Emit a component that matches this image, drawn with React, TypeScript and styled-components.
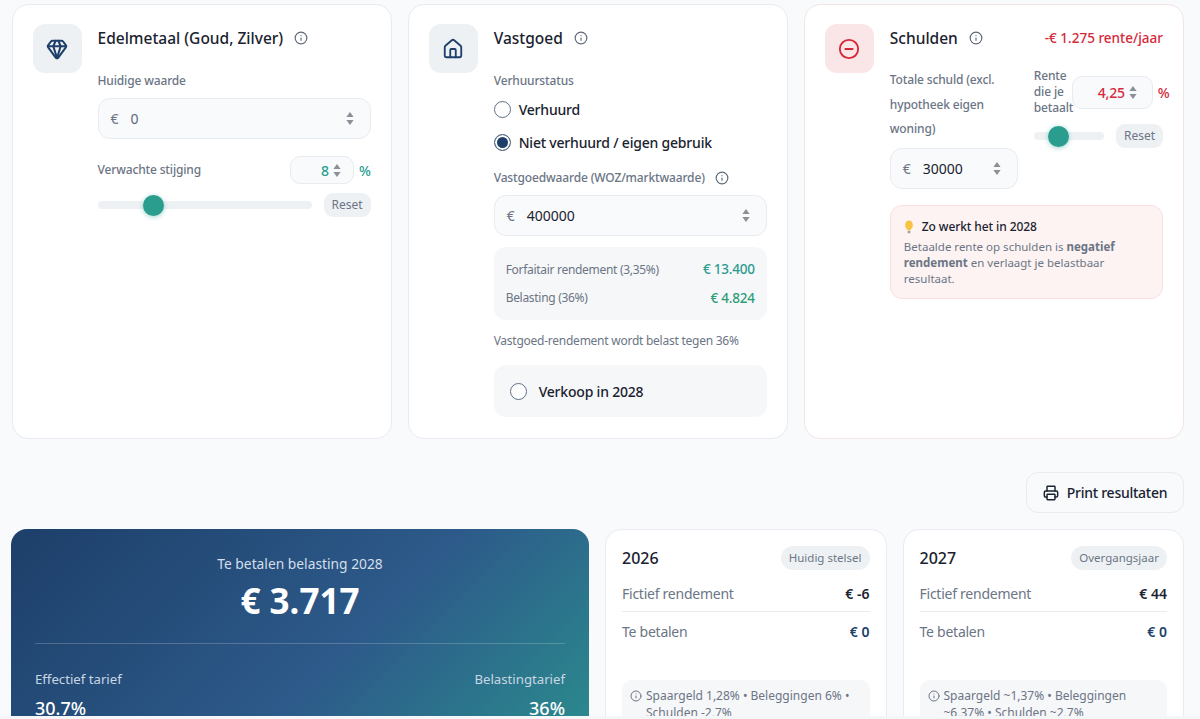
import React from "react";
import styled, { createGlobalStyle } from "styled-components";
import { CircleMinus, Gem, House, Info, Printer } from "lucide-react";

const navy = "#1d3f69";
const teal = "#2a9d8f";
const red = "#d62839";
const ink = "#1a2230";
const muted = "#6b7585";
const line = "#e8ebef";

const GlobalStyle = createGlobalStyle`
  html, body {
    margin: 0;
    height: 100%;
    overflow: hidden;
    background: #f8fafc;
  }
  body {
    font-family: "Noto Sans", "Open Sans", sans-serif;
    color: ${ink};
  }
`;

const Page = styled.div`
  height: 719px;
  overflow: hidden;
  box-sizing: border-box;
  padding: 4px 16px 0 11.5px;
`;

const TopGrid = styled.div`
  display: grid;
  grid-template-columns: repeat(3, minmax(0, 1fr));
  gap: 16px;
`;

const Card = styled.section<{ $tint?: boolean }>`
  box-sizing: border-box;
  height: 435px;
  background: #fff;
  border: 1px solid ${(p) => (p.$tint ? "#f3e4e5" : line)};
  border-radius: 16px;
  padding: 19px 20px;
  display: flex;
  gap: 16px;
`;

const IconBox = styled.div<{ $danger?: boolean }>`
  flex: none;
  width: 49px;
  height: 49px;
  border-radius: 12px;
  display: flex;
  align-items: center;
  justify-content: center;
  background: ${(p) => (p.$danger ? "#fae6e7" : "#eef1f4")};
  color: ${(p) => (p.$danger ? red : navy)};
`;

const Body = styled.div`
  flex: 1;
  min-width: 0;
`;

const TitleRow = styled.div`
  display: flex;
  align-items: center;
  gap: 11px;
  height: 28px;
`;

const Title = styled.h3`
  margin: 0;
  font-size: 15.5px;
  font-weight: 500;
  color: ${ink};
`;

const InfoIcon = styled(Info)`
  flex: none;
  color: #5f6978;
`;

const RenteTotal = styled.span`
  margin-left: auto;
  font-size: 13.5px;
  font-weight: 500;
  color: ${red};
`;

const FieldLabel = styled.div<{ $top?: number; $bottom?: number }>`
  display: flex;
  align-items: center;
  gap: 10px;
  margin: ${(p) => p.$top ?? 0}px 0 ${(p) => p.$bottom ?? 0}px;
  font-size: 12px;
  font-weight: 500;
  letter-spacing: -0.15px;
  color: ${muted};
  line-height: 20px;
`;

const NumberBox = styled.div<{ $narrow?: boolean }>`
  box-sizing: border-box;
  height: 41px;
  width: ${(p) => (p.$narrow ? "128px" : "100%")};
  display: flex;
  align-items: center;
  padding: 0 16px 0 12px;
  background: #f8fafc;
  border: 1px solid ${line};
  border-radius: 12px;
  font-size: 14px;
`;

const Euro = styled.span`
  color: ${muted};
  width: 20px;
`;

const Amount = styled.span<{ $empty?: boolean }>`
  flex: 1;
  color: ${(p) => (p.$empty ? "#5f6978" : ink)};
`;

const SpinnerShape = styled.svg`
  flex: none;
  color: #8b8f96;
`;

const Spinner = () => (
  <SpinnerShape width="8" height="15" viewBox="0 0 8 15" fill="currentColor">
    <path d="M4 1 7.6 6H.4z" />
    <path d="M4 14 .4 9h7.2z" />
  </SpinnerShape>
);

const RateRow = styled.div`
  display: flex;
  align-items: center;
  justify-content: space-between;
  margin: 17px 0 9px;
`;

const RateBox = styled.div<{ $wide?: boolean }>`
  box-sizing: border-box;
  width: ${(p) => (p.$wide ? "81px" : "64px")};
  height: ${(p) => (p.$wide ? "33px" : "28px")};
  display: flex;
  align-items: center;
  justify-content: flex-end;
  gap: 4px;
  padding: 0 ${(p) => (p.$wide ? "15px" : "12px")} 0 8px;
  background: #f8fafc;
  border: 1px solid ${line};
  border-radius: 10px;
`;

const RateValue = styled.span<{ $color: string }>`
  font-size: 14px;
  font-weight: 500;
  letter-spacing: -0.2px;
  color: ${(p) => p.$color};
`;

const RateField = styled.div`
  display: flex;
  flex: none;
  align-items: center;
  gap: 5px;
`;

const SliderRow = styled.div`
  display: flex;
  align-items: center;
  gap: 12px;
`;

const Track = styled.div`
  position: relative;
  flex: 1;
  height: 8px;
  border-radius: 4px;
  background: #eef1f4;
`;

const Thumb = styled.div`
  position: absolute;
  top: -6.5px;
  width: 21px;
  height: 21px;
  border-radius: 50%;
  background: ${teal};
  box-shadow: 0 1px 5px rgba(42, 157, 143, 0.45);
`;

const ResetButton = styled.div`
  flex: none;
  width: 47px;
  height: 24px;
  line-height: 24px;
  text-align: center;
  border-radius: 9px;
  background: #eef1f4;
  font-size: 12px;
  color: ${muted};
`;

const Slider = ({ thumb }: { thumb: number }) => (
  <SliderRow>
    <Track>
      <Thumb style={{ left: thumb }} />
    </Track>
    <ResetButton>Reset</ResetButton>
  </SliderRow>
);

const RadioRow = styled.div`
  display: flex;
  align-items: center;
  gap: 8px;
  height: 33px;
  font-size: 14px;
  font-weight: 500;
  letter-spacing: -0.2px;
`;

const Radio = styled.span<{ $on?: boolean }>`
  box-sizing: border-box;
  flex: none;
  width: 17px;
  height: 17px;
  border-radius: 50%;
  border: 1px solid #5f6f84;
  background: ${(p) => (p.$on ? navy : "#fff")};
  box-shadow: ${(p) => (p.$on ? "inset 0 0 0 2px #fff" : "none")};
`;

const StatBox = styled.div`
  margin-top: 11px;
  padding: 8px 12px;
  background: #f6f7f9;
  border-radius: 12px;
`;

const StatRow = styled.div`
  display: flex;
  align-items: center;
  justify-content: space-between;
  height: 28.5px;
  font-size: 12px;
  letter-spacing: -0.3px;
  color: ${muted};
`;

const StatValue = styled.span<{ $color: string }>`
  font-size: 13.5px;
  font-weight: 500;
  letter-spacing: -0.2px;
  color: ${(p) => p.$color};
`;

const Note = styled.p`
  margin: 12px 0 0;
  font-size: 12px;
  line-height: 18px;
  letter-spacing: -0.25px;
  color: ${muted};
`;

const SellBox = styled.div`
  margin-top: 15px;
  height: 52px;
  display: flex;
  align-items: center;
  gap: 12px;
  padding: 0 16px;
  background: #f6f7f9;
  border-radius: 12px;
  font-size: 14px;
  font-weight: 500;
  letter-spacing: -0.2px;
`;

const DebtGrid = styled.div`
  display: grid;
  grid-template-columns: 128px minmax(0, 1fr);
  gap: 16px;
  margin-top: 16px;
`;

const DebtLabel = styled.div`
  font-size: 12px;
  font-weight: 500;
  line-height: 24.5px;
  letter-spacing: -0.15px;
  color: ${muted};
  margin-bottom: 6px;
`;

const RenteHead = styled.div`
  display: flex;
  align-items: center;
  margin-bottom: 8px;
`;

const RenteLabel = styled.div`
  flex: none;
  width: 38px;
  font-size: 12px;
  font-weight: 500;
  line-height: 16px;
  letter-spacing: -0.15px;
  color: ${muted};
`;

const Tip = styled.div`
  margin-top: 16px;
  padding: 12px 13px 11px;
  background: #fdf3f2;
  border: 1px solid #f8e0de;
  border-radius: 12px;
`;

const TipTitle = styled.div`
  display: flex;
  align-items: center;
  gap: 8px;
  font-size: 12px;
  font-weight: 500;
  letter-spacing: -0.1px;
  line-height: 18px;
  margin-bottom: 3px;
`;

const TipText = styled.p`
  margin: 0;
  font-size: 11.5px;
  line-height: 16.3px;
  color: ${muted};
`;

const ActionRow = styled.div`
  display: flex;
  justify-content: flex-end;
  margin: 33px 0 16px;
`;

const PrintButton = styled.button`
  height: 41px;
  width: 158px;
  display: flex;
  align-items: center;
  justify-content: center;
  gap: 8px;
  background: #f8fafc;
  border: 1px solid ${line};
  border-radius: 12px;
  font: 500 14px "Noto Sans", sans-serif;
  letter-spacing: -0.25px;
  color: ${ink};
  padding: 0;
`;

const BottomGrid = styled.div`
  display: grid;
  grid-template-columns: 578px minmax(0, 1fr) minmax(0, 1fr);
  gap: 16px;
  margin-left: -0.5px;
`;

const Hero = styled.section`
  box-sizing: border-box;
  height: 330px;
  padding: 24px;
  border-radius: 16px;
  color: #fff;
  background: linear-gradient(135deg, #1d3f69 0%, #2d5a8a 50%, #2a9d8f 100%);
`;

const HeroLabel = styled.div`
  text-align: center;
  font-size: 13.8px;
  line-height: 21px;
  color: #d4dfea;
`;

const HeroAmount = styled.div`
  text-align: center;
  font-size: 35px;
  font-weight: 700;
  line-height: 48px;
  margin-top: 3px;
`;

const HeroRule = styled.hr`
  border: 0;
  height: 1px;
  background: rgba(255, 255, 255, 0.2);
  margin: 18px 0 25px;
`;

const HeroStats = styled.div`
  display: flex;
  justify-content: space-between;
`;

const HeroStat = styled.div<{ $right?: boolean }>`
  text-align: ${(p) => (p.$right ? "right" : "left")};
`;

const HeroStatLabel = styled.div`
  font-size: 13.2px;
  line-height: 21px;
  color: #c9d6e3;
`;

const HeroStatValue = styled.div`
  font-size: 18px;
  font-weight: 500;
  line-height: 27px;
  margin-top: 5px;
`;

const YearCard = styled.section`
  box-sizing: border-box;
  padding: 16px;
  background: #fff;
  border: 1px solid ${line};
  border-radius: 16px;
`;

const YearHead = styled.div`
  display: flex;
  align-items: center;
  justify-content: space-between;
  height: 24px;
  margin-bottom: 5px;
`;

const Year = styled.span`
  font-size: 16px;
  font-weight: 500;
`;

const Pill = styled.span`
  padding: 0 8px;
  line-height: 24px;
  border-radius: 12px;
  background: #eef1f4;
  font-size: 11.5px;
  color: ${muted};
`;

const YearRow = styled.div<{ $ruled?: boolean }>`
  display: flex;
  align-items: center;
  justify-content: space-between;
  height: ${(p) => (p.$ruled ? "36px" : "38px")};
  font-size: 14px;
  letter-spacing: -0.25px;
  color: ${muted};
  border-bottom: ${(p) => (p.$ruled ? `1px solid ${line}` : "0")};
`;

const YearValue = styled.span<{ $navy?: boolean }>`
  font-weight: 600;
  letter-spacing: 0;
  color: ${(p) => (p.$navy ? navy : ink)};
`;

const RateNote = styled.div`
  margin-top: 30px;
  display: flex;
  gap: 4px;
  padding: 8px;
  background: #f6f7f9;
  border-radius: 10px;
  font-size: 12px;
  line-height: 16.5px;
  color: ${muted};
`;

const NoteIcon = styled(Info)`
  flex: none;
  margin-top: 2px;
`;

const Gutter = styled.div`
  position: fixed;
  left: 0;
  right: 0;
  bottom: 0;
  height: 3px;
  background: #f5f6f8;
`;

const BulbIcon = () => (
  <svg width="10" height="14" viewBox="0 0 12 14" preserveAspectRatio="none">
    <path d="M6 .5a4.6 4.6 0 0 0-2.6 8.4c.5.4.7.9.7 1.4h3.8c0-.5.2-1 .7-1.4A4.6 4.6 0 0 0 6 .5z" fill="#f6c445" />
    <rect x="4.2" y="10.8" width="3.6" height="2.4" rx="1" fill="#a9a39a" />
  </svg>
);

const YearSummary = ({
  year,
  tag,
  fictief,
  note,
}: {
  year: string;
  tag: string;
  fictief: string;
  note: string;
}) => (
  <YearCard>
    <YearHead>
      <Year>{year}</Year>
      <Pill>{tag}</Pill>
    </YearHead>
    <YearRow $ruled>
      Fictief rendement
      <YearValue>{fictief}</YearValue>
    </YearRow>
    <YearRow>
      Te betalen
      <YearValue $navy>€ 0</YearValue>
    </YearRow>
    <RateNote>
      <NoteIcon size={12} />
      <span>{note}</span>
    </RateNote>
  </YearCard>
);

export default function App() {
  return (
    <Page>
      <GlobalStyle />
      <TopGrid>
        <Card>
          <IconBox>
            <Gem size={22} strokeWidth={2.2} />
          </IconBox>
          <Body>
            <TitleRow>
              <Title>Edelmetaal (Goud, Zilver)</Title>
              <InfoIcon size={14} />
            </TitleRow>
            <FieldLabel $top={19} $bottom={7}>Huidige waarde</FieldLabel>
            <NumberBox>
              <Euro>€</Euro>
              <Amount $empty>0</Amount>
              <Spinner />
            </NumberBox>
            <RateRow>
              <FieldLabel>Verwachte stijging</FieldLabel>
              <RateField>
                <RateBox>
                  <RateValue $color={teal}>8</RateValue>
                  <Spinner />
                </RateBox>
                <RateValue $color={teal}>%</RateValue>
              </RateField>
            </RateRow>
            <Slider thumb={45} />
          </Body>
        </Card>

        <Card>
          <IconBox>
            <House size={22} />
          </IconBox>
          <Body>
            <TitleRow>
              <Title>Vastgoed</Title>
              <InfoIcon size={14} />
            </TitleRow>
            <FieldLabel $top={19} $bottom={2}>Verhuurstatus</FieldLabel>
            <RadioRow>
              <Radio />
              Verhuurd
            </RadioRow>
            <RadioRow>
              <Radio $on />
              Niet verhuurd / eigen gebruik
            </RadioRow>
            <FieldLabel $top={9} $bottom={7}>
              Vastgoedwaarde (WOZ/marktwaarde)
              <InfoIcon size={14} />
            </FieldLabel>
            <NumberBox>
              <Euro>€</Euro>
              <Amount>400000</Amount>
              <Spinner />
            </NumberBox>
            <StatBox>
              <StatRow>
                Forfaitair rendement (3,35%)
                <StatValue $color={teal}>€ 13.400</StatValue>
              </StatRow>
              <StatRow>
                Belasting (36%)
                <StatValue $color="#2d9d78">€ 4.824</StatValue>
              </StatRow>
            </StatBox>
            <Note>Vastgoed-rendement wordt belast tegen 36%</Note>
            <SellBox>
              <Radio />
              Verkoop in 2028
            </SellBox>
          </Body>
        </Card>

        <Card $tint>
          <IconBox $danger>
            <CircleMinus size={22} />
          </IconBox>
          <Body>
            <TitleRow>
              <Title>Schulden</Title>
              <InfoIcon size={14} />
              <RenteTotal>-€ 1.275 rente/jaar</RenteTotal>
            </TitleRow>
            <DebtGrid>
              <div>
                <DebtLabel>Totale schuld (excl. hypotheek eigen woning)</DebtLabel>
                <NumberBox $narrow>
                  <Euro>€</Euro>
                  <Amount>30000</Amount>
                  <Spinner />
                </NumberBox>
              </div>
              <div>
                <RenteHead>
                  <RenteLabel>Rente die je betaalt</RenteLabel>
                  <RateField>
                    <RateBox $wide>
                      <RateValue $color={red}>4,25</RateValue>
                      <Spinner />
                    </RateBox>
                    <RateValue $color={red}>%</RateValue>
                  </RateField>
                </RenteHead>
                <Slider thumb={14} />
              </div>
            </DebtGrid>
            <Tip>
              <TipTitle>
                <BulbIcon />
                Zo werkt het in 2028
              </TipTitle>
              <TipText>
                Betaalde rente op schulden is <b>negatief rendement</b> en verlaagt je belastbaar
                resultaat.
              </TipText>
            </Tip>
          </Body>
        </Card>
      </TopGrid>

      <ActionRow>
        <PrintButton>
          <Printer size={16} strokeWidth={2.2} />
          Print resultaten
        </PrintButton>
      </ActionRow>

      <BottomGrid>
        <Hero>
          <HeroLabel>Te betalen belasting 2028</HeroLabel>
          <HeroAmount>€ 3.717</HeroAmount>
          <HeroRule />
          <HeroStats>
            <HeroStat>
              <HeroStatLabel>Effectief tarief</HeroStatLabel>
              <HeroStatValue>30.7%</HeroStatValue>
            </HeroStat>
            <HeroStat $right>
              <HeroStatLabel>Belastingtarief</HeroStatLabel>
              <HeroStatValue>36%</HeroStatValue>
            </HeroStat>
          </HeroStats>
        </Hero>
        <YearSummary
          year="2026"
          tag="Huidig stelsel"
          fictief="€ -6"
          note="Spaargeld 1,28% • Beleggingen 6% • Schulden -2,7%"
        />
        <YearSummary
          year="2027"
          tag="Overgangsjaar"
          fictief="€ 44"
          note="Spaargeld ~1,37% • Beleggingen ~6,37% • Schulden ~2,7%"
        />
      </BottomGrid>
      <Gutter />
    </Page>
  );
}
